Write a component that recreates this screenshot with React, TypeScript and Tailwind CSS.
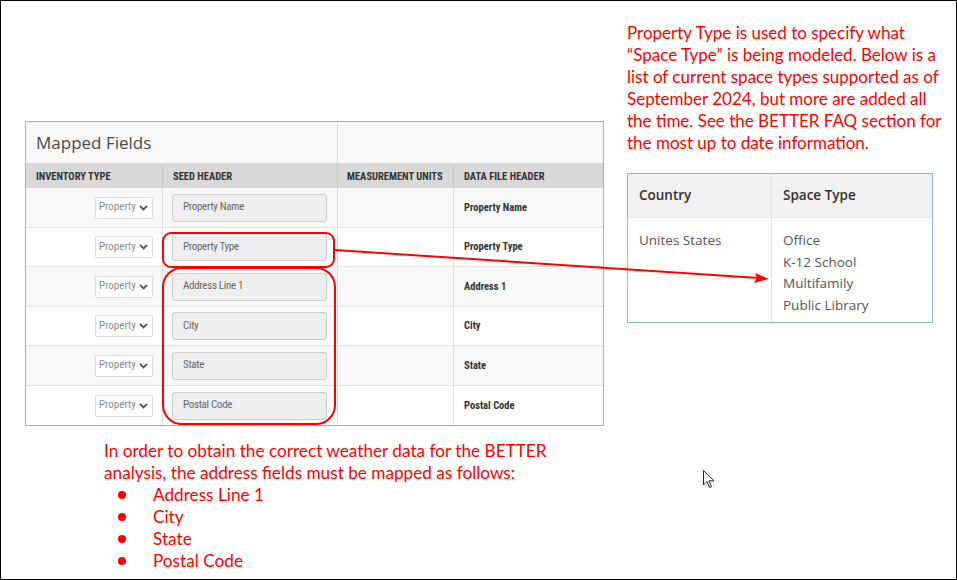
import React from 'react';

const condensed = { fontFamily: '"Roboto Condensed", "Liberation Sans Narrow", Roboto, sans-serif' };
const calibri = { fontFamily: 'Lato, "Open Sans", sans-serif' };
const openSans = { fontFamily: '"Open Sans", "Noto Sans", sans-serif' };

const rows = [
  { seed: 'Property Name', file: 'Property Name' },
  { seed: 'Property Type', file: 'Property Type' },
  { seed: 'Address Line 1', file: 'Address 1' },
  { seed: 'City', file: 'City' },
  { seed: 'State', file: 'State' },
  { seed: 'Postal Code', file: 'Postal Code' },
];

const spaceTypes = ['Office', 'K-12 School', 'Multifamily', 'Public Library'];
const bullets = ['Address Line 1', 'City', 'State', 'Postal Code'];

const noteLines = [
  'Property Type is used to specify what',
  '“Space Type” is being modeled. Below is a',
  'list of current space types supported as of',
  'September 2024, but more are added all',
  'the time. See the BETTER FAQ section for',
  'the most up to date information.',
];

const Chevron: React.FC = () => (
  <svg width="9" height="6" viewBox="0 0 9 6" className="ml-[3px]">
    <path d="M1 1 L4.5 4.5 L8 1" fill="none" stroke="#555" strokeWidth="1.8" />
  </svg>
);

const MappedFields: React.FC = () => (
  <div className="w-[579px] border border-[#8db3e2] bg-white whitespace-nowrap" style={condensed}>
    {/* title */}
    <div className="flex h-[41px] bg-[#f8f8f8]">
      <div className="w-[312px] border-r border-[#dddddd] pl-[10px] flex items-center">
        <span className="text-[17px] text-[#4a4a4a]" style={openSans}>Mapped Fields</span>
      </div>
      <div className="flex-1" />
    </div>
    {/* header */}
    <div className="flex h-[25px] bg-[#d8d8d8] text-[10.5px] font-bold text-[#333] pt-[2px]">
      <div className="w-[137px] border-r border-[#c9c9c9] pl-[10px] flex items-center">INVENTORY TYPE</div>
      <div className="w-[175px] border-r border-[#c9c9c9] pl-[10px] flex items-center">SEED HEADER</div>
      <div className="w-[116px] border-r border-[#c9c9c9] pl-[9px] flex items-center">MEASUREMENT UNITS</div>
      <div className="flex-1 pl-[10px] flex items-center">DATA FILE HEADER</div>
    </div>
    {rows.map((r, i) => (
      <div
        key={r.seed}
        className={
          'flex ' +
          (i % 2 === 0 ? 'h-[40px] bg-[#f8f8f8] ' : 'h-[39px] bg-white ') +
          (i < rows.length - 1 ? 'border-b border-[#e3e3e3]' : '')
        }
      >
        <div className="w-[137px] border-r border-[#dddddd] flex items-center justify-end pr-[9px]">
          <div className="h-[22px] w-[58px] border border-[#dddddd] rounded-[2px] bg-white flex items-center pl-[3px] text-[11px] text-[#8a8a8a]">
            Property
            <Chevron />
          </div>
        </div>
        <div className="w-[175px] border-r border-[#dddddd] flex items-center pl-[9px]">
          <div className="h-[28px] w-[155px] border border-[#cccccc] rounded-[3px] bg-[#eeeeee] flex items-center pl-[10px] text-[11px] text-[#666] tracking-[-0.3px]">
            {r.seed}
          </div>
        </div>
        <div className="w-[116px] border-r border-[#dddddd]" />
        <div className="flex-1 flex items-center pl-[10px] text-[10.5px] font-bold text-[#333]">
          {r.file}
        </div>
      </div>
    ))}
  </div>
);

const SpaceTable: React.FC = () => (
  <div className="w-[306px] border border-[#8db3e2] bg-white" style={openSans}>
    <div className="flex h-[44px] bg-[#f1f1f1] border-b border-[#e6e6e6] text-[13.5px] font-semibold text-[#333]">
      <div className="w-[144px] border-r border-[#e2e2e2] pl-[11px] flex items-center">Country</div>
      <div className="flex-1 pl-[11px] flex items-center">Space Type</div>
    </div>
    <div className="flex h-[104px] text-[13.5px] text-[#555]">
      <div className="w-[144px] border-r border-[#e2e2e2] pl-[11px] pt-[12px] leading-[21.7px]">Unites States</div>
      <div className="flex-1 pl-[11px] pt-[12px] leading-[21.7px]">
        {spaceTypes.map((s) => (
          <div key={s}>{s}</div>
        ))}
      </div>
    </div>
  </div>
);

export default function App() {
  return (
    <div className="relative w-[957px] h-[580px] border border-black bg-white overflow-hidden">
      <div className="flex">
        <div className="ml-[24px] mt-[120px]">
          <MappedFields />
          <div className="ml-[79px] mt-[14px] text-[17.2px] leading-[22px] text-[#ff0000] whitespace-nowrap" style={calibri}>
            <div>In order to obtain the correct weather data for the BETTER</div>
            <div>analysis, the address fields must be mapped as follows:</div>
            {bullets.map((b) => (
              <div key={b} className="flex items-center">
                <span className="ml-[14px] w-[8px] h-[8px] rounded-full bg-[#ff0000]" />
                <span className="ml-[27px]">{b}</span>
              </div>
            ))}
          </div>
        </div>
        <div className="ml-[23px] mt-[21px]">
          <div className="text-[17px] leading-[22px] text-[#ff0000] whitespace-nowrap" style={calibri}>
            {noteLines.map((l) => (
              <div key={l}>{l}</div>
            ))}
          </div>
          <div className="mt-[19px]">
            <SpaceTable />
          </div>
        </div>
      </div>

      {/* red annotation outlines */}
      <div className="absolute left-[161px] top-[231px] w-[173px] h-[36px] border-2 border-[#ff0000] rounded-[9px]" />
      <div className="absolute left-[161px] top-[266px] w-[174px] h-[158px] border-2 border-[#ff0000] rounded-[20px]" />

      {/* arrow */}
      <svg className="absolute left-0 top-0" width="957" height="580">
        <line x1="334" y1="249" x2="758" y2="277" stroke="#ff0000" strokeWidth="2" />
        <path d="M768 278 L754 272 L756 277 L753 282 Z" fill="#ff0000" />
      </svg>

      {/* mouse cursor */}
      <svg className="absolute left-[702px] top-[469px]" width="12" height="19" viewBox="0 0 12 19">
        <path
          d="M0.5 0.5 L0.5 15 L4 11.5 L6.5 17.5 L8.5 16.7 L6 10.8 L11 10.8 Z"
          fill="white"
          stroke="#222"
          strokeWidth="1"
          strokeLinejoin="miter"
        />
      </svg>
    </div>
  );
}
